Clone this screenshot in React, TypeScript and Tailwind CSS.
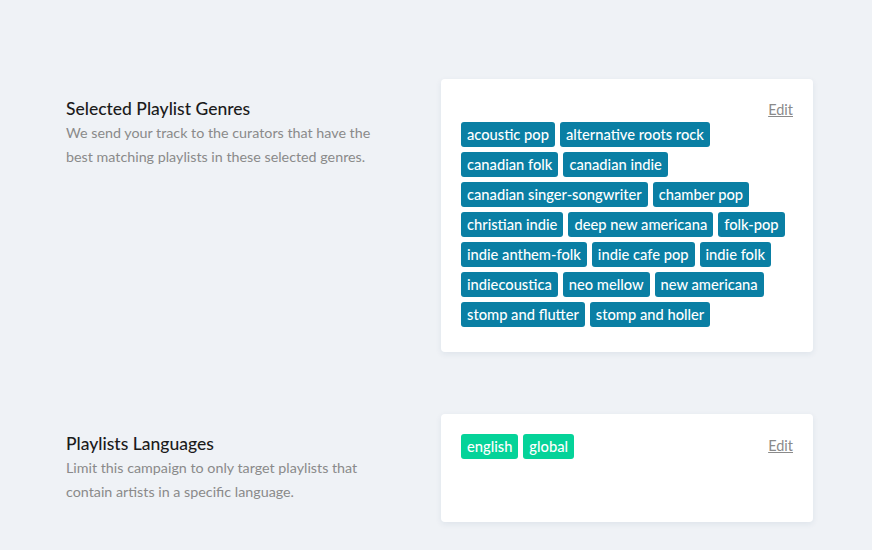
import React from "react";

const genres = [
  "acoustic pop",
  "alternative roots rock",
  "canadian folk",
  "canadian indie",
  "canadian singer-songwriter",
  "chamber pop",
  "christian indie",
  "deep new americana",
  "folk-pop",
  "indie anthem-folk",
  "indie cafe pop",
  "indie folk",
  "indiecoustica",
  "neo mellow",
  "new americana",
  "stomp and flutter",
  "stomp and holler",
];

const langs = ["english", "global"];

function Tag({ label, green }: { label: string; green?: boolean }) {
  return (
    <span
      className={
        "inline-flex h-[25px] items-center rounded-[3px] px-[6px] text-[14.7px] font-medium leading-none text-white " +
        (green ? "bg-[#05d399]" : "bg-[#0a7fa4]")
      }
    >
      {label}
    </span>
  );
}

export default function App() {
  return (
    <div
      className="min-h-[550px] w-full bg-[#eff2f6] pt-[79px]"
      style={{ fontFamily: "Lato, 'Noto Sans', sans-serif" }}
    >
      <div className="flex pl-[66px]">
        <div className="w-[375px] pt-[19px]">
          <h2 className="text-[17.5px] font-medium leading-[22px] text-[#1b1b1b]">
            Selected Playlist Genres
          </h2>
          <p className="mt-[1px] w-[320px] text-[14.3px] leading-[24px] text-[#8a8a8a]">
            We send your track to the curators that have the best matching
            playlists in these selected genres.
          </p>
        </div>
        <div className="w-[372px] rounded-[4px] bg-white px-[20px] pt-[20px] pb-[25px] shadow-[0_2px_6px_rgba(30,60,100,0.08)]">
          <div className="flex h-[23px] justify-end pt-[1px]">
            <a className="text-[14.5px] leading-[20px] text-[#8a8a8a] underline">Edit</a>
          </div>
          <div className="flex flex-wrap gap-[5px]">
            {genres.map((g) => (
              <Tag key={g} label={g} />
            ))}
          </div>
        </div>
      </div>

      <div className="mt-[62px] flex pl-[66px]">
        <div className="w-[375px] pt-[19px]">
          <h2 className="text-[17.5px] font-medium leading-[22px] text-[#1b1b1b]">
            Playlists Languages
          </h2>
          <p className="mt-[1px] w-[320px] text-[14.3px] leading-[24px] text-[#8a8a8a]">
            Limit this campaign to only target playlists that contain artists in
            a specific language.
          </p>
        </div>
        <div className="flex h-[108px] w-[372px] items-start justify-between rounded-[4px] bg-white px-[20px] pt-[20px] shadow-[0_2px_6px_rgba(30,60,100,0.08)]">
          <div className="flex flex-wrap gap-[5px]">
            {langs.map((g) => (
              <Tag key={g} label={g} green />
            ))}
          </div>
          <a className="mt-[2px] text-[14.5px] leading-[20px] text-[#8a8a8a] underline">Edit</a>
        </div>
      </div>
    </div>
  );
}
